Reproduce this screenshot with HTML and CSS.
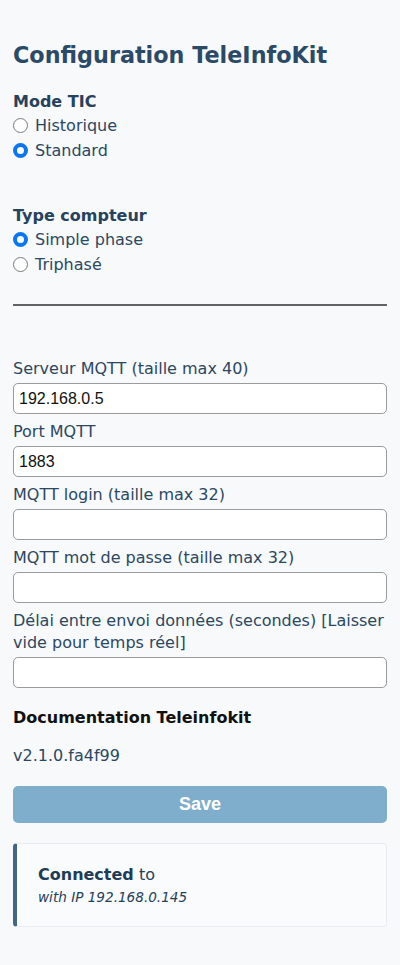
FILE: index.html
```html
<!DOCTYPE html>
<html lang="fr">
<head>
<meta charset="utf-8">
<title>Configuration TeleInfoKit</title>
<link rel="stylesheet" href="styles.css">
</head>
<body>
<main class="page">
  <h1 class="title">Configuration TeleInfoKit</h1>

  <section class="group">
    <div class="group-title">Mode TIC</div>
    <label class="radio-row"><input type="radio" name="tic" class="radio"><span>Historique</span></label>
    <label class="radio-row"><input type="radio" name="tic" class="radio" checked><span>Standard</span></label>
  </section>

  <section class="group group-second">
    <div class="group-title">Type compteur</div>
    <label class="radio-row"><input type="radio" name="type" class="radio" checked><span>Simple phase</span></label>
    <label class="radio-row"><input type="radio" name="type" class="radio"><span>Triphasé</span></label>
  </section>

  <hr class="sep">

  <div class="fields">
    <label class="field"><span class="field-label">Serveur MQTT (taille max 40)</span><input class="input" type="text" value="192.168.0.5"></label>
    <label class="field"><span class="field-label">Port MQTT</span><input class="input" type="text" value="1883"></label>
    <label class="field"><span class="field-label">MQTT login (taille max 32)</span><input class="input" type="text"></label>
    <label class="field"><span class="field-label">MQTT mot de passe (taille max 32)</span><input class="input" type="text"></label>
    <label class="field"><span class="field-label">Délai entre envoi données (secondes) [Laisser vide pour temps réel]</span><input class="input" type="text"></label>
  </div>

  <div class="doc">Documentation Teleinfokit</div>
  <div class="version">v2.1.0.fa4f99</div>

  <button class="save" type="button">Save</button>

  <div class="status">
    <div class="status-line"><strong>Connected</strong> to</div>
    <div class="status-ip">with IP 192.168.0.145</div>
  </div>
</main>
</body>
</html>
```

FILE: styles.css
```css
html, body {
  margin: 0;
  padding: 0;
  background: #f7f9fb;
}
body {
  font-family: "DejaVu Sans", Verdana, sans-serif;
  font-size: 16px;
  color: #2c4761;
}
.page {
  padding: 42px 13px 30px;
  display: flex;
  flex-direction: column;
}
.title {
  margin: 0;
  font-size: 22.3px;
  line-height: 27px;
  font-weight: bold;
  color: #2b4a67;
}
.group {
  margin-top: 21px;
  display: flex;
  flex-direction: column;
}
.group-second {
  margin-top: 41px;
}
.group-title {
  font-weight: bold;
  line-height: 23px;
  color: #26425d;
}
.radio-row {
  display: flex;
  align-items: center;
  gap: 7px;
  height: 25px;
  line-height: 25px;
}
.radio {
  appearance: none;
  -webkit-appearance: none;
  margin: 0;
  width: 15px;
  height: 15px;
  border-radius: 50%;
  border: 1px solid #7a7a7a;
  background: #fff;
  box-sizing: border-box;
  flex: none;
}
.radio:checked {
  border: 4.5px solid #0b76f4;
  background: #fff;
}
.sep {
  margin: 27px 0 0;
  border: 0;
  height: 2px;
  background: #626262;
}
.fields {
  margin-top: 52px;
  display: flex;
  flex-direction: column;
}
.field {
  display: flex;
  flex-direction: column;
  margin-bottom: 7px;
}
.field-label {
  line-height: 22px;
}
.input {
  margin-top: 3px;
  height: 31px;
  box-sizing: border-box;
  border: 1px solid #9b9b9b;
  border-radius: 5px;
  background: #fff;
  padding: 0 5px;
  font-family: "Liberation Sans", Arial, sans-serif;
  font-size: 16px;
  color: #111;
  outline: none;
}
.doc {
  margin-top: 12px;
  font-weight: bold;
  line-height: 22px;
  color: #111;
}
.version {
  margin-top: 16px;
  line-height: 22px;
}
.save {
  margin-top: 19px;
  height: 37px;
  border: 0;
  border-radius: 5px;
  background: #7eaecb;
  color: #fff;
  font-family: "Liberation Sans", Arial, sans-serif;
  font-weight: bold;
  font-size: 18px;
  padding: 0;
}
.status {
  margin-top: 20px;
  background: #fafbfd;
  border: 1px solid #e9ecef;
  border-left: 4px solid #3f6787;
  border-radius: 4px;
  padding: 20px 20px 18px 21px;
}
.status-line {
  line-height: 22px;
  color: #24405a;
}
.status-line strong {
  color: #203b55;
}
.status-ip {
  font-style: italic;
  font-size: 13.6px;
  line-height: 22px;
  color: #24405a;
}
```
